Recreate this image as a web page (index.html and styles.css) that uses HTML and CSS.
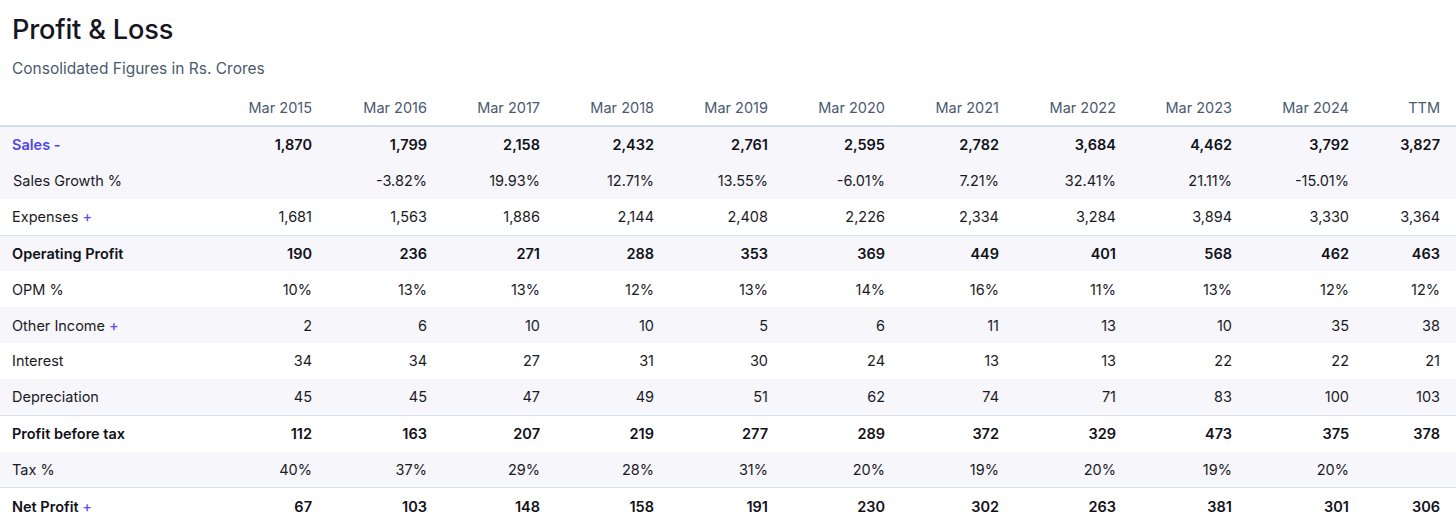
FILE: index.html
```html
<!DOCTYPE html>
<html>
<head>
<meta charset="utf-8">
<link rel="stylesheet" href="styles.css">
</head>
<body>
<section class="pl">
  <div class="head">
    <h1 class="title">Profit &amp; Loss</h1>
    <p class="sub">Consolidated Figures in Rs. Crores</p>
  </div>
  <table class="data">
    <colgroup>
      <col class="c0"><col class="c1"><col class="c2"><col class="c3"><col class="c4"><col class="c5"><col class="c6"><col class="c7"><col class="c8"><col class="c9"><col class="c10"><col class="c11">
    </colgroup>
    <thead>
      <tr><th></th><th>Mar 2015</th><th>Mar 2016</th><th>Mar 2017</th><th>Mar 2018</th><th>Mar 2019</th><th>Mar 2020</th><th>Mar 2021</th><th>Mar 2022</th><th>Mar 2023</th><th>Mar 2024</th><th>TTM</th></tr>
    </thead>
    <tbody>
      <tr class="shade strong"><td class="lbl"><span class="link">Sales&nbsp;-</span></td><td>1,870</td><td>1,799</td><td>2,158</td><td>2,432</td><td>2,761</td><td>2,595</td><td>2,782</td><td>3,684</td><td>4,462</td><td>3,792</td><td>3,827</td></tr>
      <tr class="shade"><td class="lbl sublbl">Sales Growth %</td><td></td><td>-3.82%</td><td>19.93%</td><td>12.71%</td><td>13.55%</td><td>-6.01%</td><td>7.21%</td><td>32.41%</td><td>21.11%</td><td>-15.01%</td><td></td></tr>
      <tr><td class="lbl">Expenses <span class="plus">+</span></td><td>1,681</td><td>1,563</td><td>1,886</td><td>2,144</td><td>2,408</td><td>2,226</td><td>2,334</td><td>3,284</td><td>3,894</td><td>3,330</td><td>3,364</td></tr>
      <tr class="shade strong top"><td class="lbl">Operating Profit</td><td>190</td><td>236</td><td>271</td><td>288</td><td>353</td><td>369</td><td>449</td><td>401</td><td>568</td><td>462</td><td>463</td></tr>
      <tr><td class="lbl">OPM %</td><td>10%</td><td>13%</td><td>13%</td><td>12%</td><td>13%</td><td>14%</td><td>16%</td><td>11%</td><td>13%</td><td>12%</td><td>12%</td></tr>
      <tr class="shade"><td class="lbl">Other Income <span class="plus">+</span></td><td>2</td><td>6</td><td>10</td><td>10</td><td>5</td><td>6</td><td>11</td><td>13</td><td>10</td><td>35</td><td>38</td></tr>
      <tr><td class="lbl">Interest</td><td>34</td><td>34</td><td>27</td><td>31</td><td>30</td><td>24</td><td>13</td><td>13</td><td>22</td><td>22</td><td>21</td></tr>
      <tr class="shade"><td class="lbl">Depreciation</td><td>45</td><td>45</td><td>47</td><td>49</td><td>51</td><td>62</td><td>74</td><td>71</td><td>83</td><td>100</td><td>103</td></tr>
      <tr class="strong top"><td class="lbl">Profit before tax</td><td>112</td><td>163</td><td>207</td><td>219</td><td>277</td><td>289</td><td>372</td><td>329</td><td>473</td><td>375</td><td>378</td></tr>
      <tr class="shade"><td class="lbl">Tax %</td><td>40%</td><td>37%</td><td>29%</td><td>28%</td><td>31%</td><td>20%</td><td>19%</td><td>20%</td><td>19%</td><td>20%</td><td></td></tr>
      <tr class="strong top"><td class="lbl">Net Profit <span class="plus">+</span></td><td>67</td><td>103</td><td>148</td><td>158</td><td>191</td><td>230</td><td>302</td><td>263</td><td>381</td><td>301</td><td>306</td></tr>
    </tbody>
  </table>
</section>
</body>
</html>
```
FILE: styles.css
```css
html, body {
  margin: 0;
  padding: 0;
  background: #ffffff;
}
body {
  font-family: Inter, "Noto Sans", "Liberation Sans", sans-serif;
  color: #1b1b1f;
  overflow: hidden;
}
.head {
  padding: 0 12px;
}
.title {
  margin: 0;
  padding-top: 13px;
  font-size: 27.2px;
  line-height: 34px;
  font-weight: 500;
  color: #161622;
  letter-spacing: -0.2px;
}
.sub {
  margin: 11px 0 0;
  font-size: 15.5px;
  line-height: 22px;
  color: #4a5a6d;
}
.data {
  width: 100%;
  border-collapse: collapse;
  table-layout: fixed;
  margin-top: 9px;
  font-size: 14.5px;
}
.c0 { width: 213px; }
.c1 { width: 115px; }
.c2 { width: 115px; }
.c3 { width: 113px; }
.c4 { width: 114px; }
.c5 { width: 114px; }
.c6 { width: 117px; }
.c7 { width: 114px; }
.c8 { width: 117px; }
.c9 { width: 116px; }
.c10 { width: 117px; }
.c11 { width: 91px; }
.data th, .data td {
  text-align: right;
  padding: 0 16px 0 0;
  height: 35.85px;
  white-space: nowrap;
}
.data th {
  font-weight: 400;
  color: #4a5a70;
  height: 36px;
  border-bottom: 2px solid #d5deee;
}
.data td.lbl {
  text-align: left;
  padding: 0 0 0 12px;
}
.data td.sublbl { padding-left: 13px; }
.shade td { background: #f6f6fb; }
.strong td { font-weight: 600; color: #111118; }
.top td { border-top: 1px solid #d8e0ee; }
.link { color: #4f46e8; }
.plus {
  color: #5b53f0;
  font-weight: 500;
}
```
